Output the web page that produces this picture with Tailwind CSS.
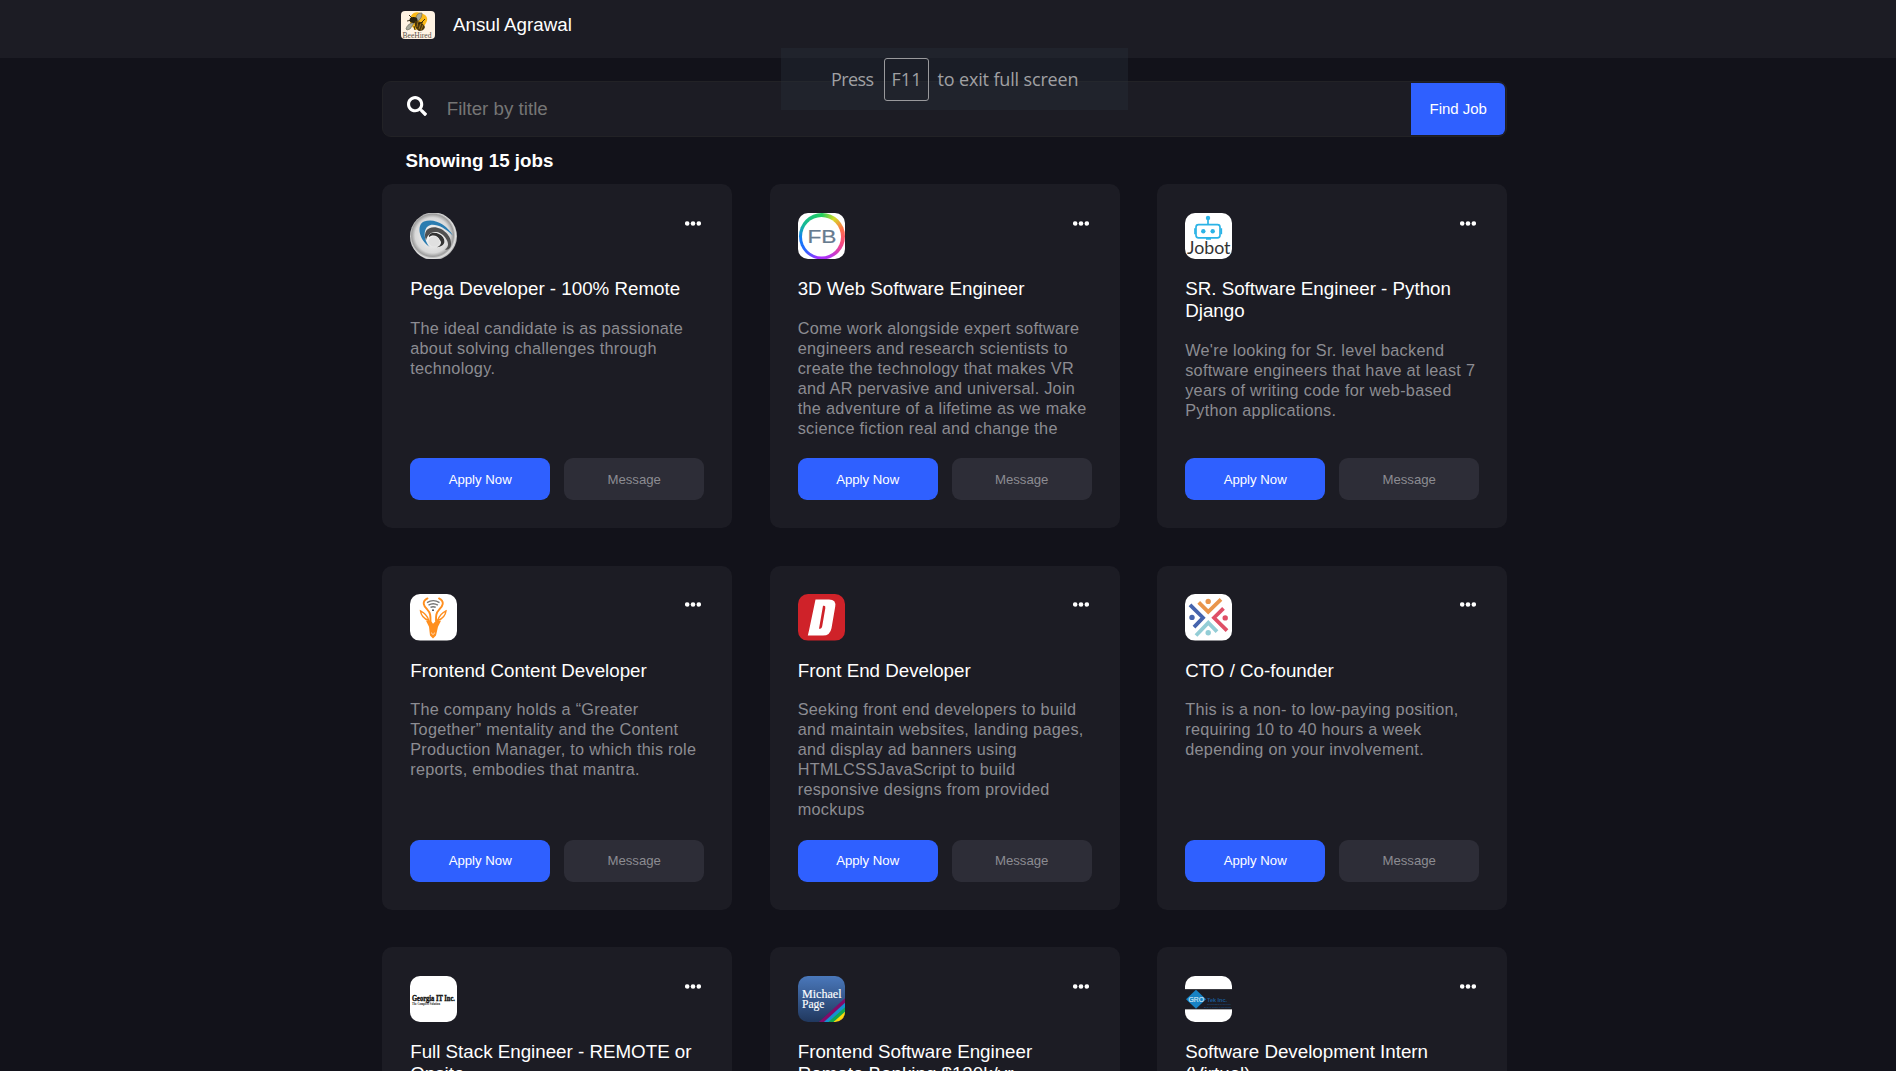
<!DOCTYPE html>
<html lang="en">
<head>
<meta charset="utf-8">
<title>BeeHired</title>
<script src="https://cdn.jsdelivr.net/npm/@tailwindcss/browser@4"></script>
</head>
<body class="h-[1071px] overflow-hidden bg-[#12121a] font-['Liberation_Sans',Arial,sans-serif] text-white">
<header class="h-[58px] bg-[#1c1c24] pl-[401px] pt-[11px]">
  <div class="flex items-start gap-[18px]">
    <svg class="h-[28px] w-[34px] rounded-[4px]" viewBox="0 0 34 28">
      <rect width="34" height="28" fill="#fff3e3"/>
      <path d="M10 5c3-5 8-4 12-2 5 2 5 6 3 9l-3 5-8 2-5-6z" fill="#fbb917"/>
      <path d="M5 18c1-4 4-6 8-6l-4 6-3 1zM15 8c0-4 2-6 6-6 0 3-1 6-4 8z" fill="#a9aa9c" stroke="#6d6d60" stroke-width=".7"/>
      <ellipse cx="12.500" cy="9" rx="4" ry="3" fill="#2b230f"/>
      <path d="M14 10c5 0 8 2 10 6-1 3-3 4-6 4-3-2-5-5-4-10z" fill="#4a360c"/>
      <path d="M17 11l-1 5M20 12l-2 6M22 14l-2 5" stroke="#c08a1b" stroke-width=".7"/>
      <path d="M17 13l5-2M8 4l3 3M6 10l5-1M14 19l-1-4M24 8l-4 4" stroke="#2b230f" stroke-width=".9"/>
      <text x="1.500" y="26.800" font-family="Liberation Serif" font-size="8" textLength="29" lengthAdjust="spacingAndGlyphs" fill="#5c5248">BeeHired</text>
    </svg>
    <span class="pt-[3px] text-[18.75px] leading-[22px]">Ansul Agrawal</span>
  </div>
</header>

<main class="ml-[382.200px] w-[1125px] pt-[23px]">
  <div class="flex h-[56px] items-start rounded-[9px] border border-[#222226] bg-[#1c1c24]">
    <svg class="ml-[24px] mt-[14px] size-[20px] shrink-0" viewBox="0 0 512 512" fill="#fff"><path d="M505 442.7L405.3 343c-4.500-4.500-10.600-7-17-7H372c27.600-35.300 44-79.700 44-128C416 93.100 322.900 0 208 0S0 93.100 0 208s93.100 208 208 208c48.300 0 92.700-16.400 128-44v16.300c0 6.400 2.500 12.500 7 17l99.700 99.700c9.400 9.400 24.600 9.400 33.900 0l28.300-28.300c9.400-9.400 9.400-24.600.1-34zM208 336c-70.700 0-128-57.200-128-128 0-70.700 57.200-128 128-128 70.700 0 128 57.200 128 128 0 70.700-57.200 128-128 128z"/></svg>
    <span class="ml-[19.500px] mt-[16px] flex-1 text-[18.75px] leading-[22px] text-[#757575]">Filter by title</span>
    <button class="mr-px mt-px h-[52px] w-[94px] rounded-r-[6px] bg-[#2f60ff] pt-px text-[15px] tracking-[-0.03px]">Find Job</button>
  </div>
  <h1 class="ml-[23.200px] mt-[12.600px] text-[18.75px] leading-[22px] font-bold">Showing 15 jobs</h1>
  <div id="jobs" class="mt-[12.500px] grid grid-cols-[350px_350px_350px] gap-[37.5px]"></div>
</main>

<div class="absolute left-[781px] top-[48px] flex h-[62px] w-[347px] items-center bg-[#29303a]/40 pl-[50px] font-['Open_Sans',sans-serif] text-[18px] text-[#a0a0a3]">
  <span class="w-[53px] tracking-[-0.6px]">Press</span>
  <span class="flex h-[43px] w-[45px] items-center justify-center rounded-[3px] border border-[#99999c]">F11</span>
  <span class="ml-[8.500px] whitespace-nowrap tracking-[-0.150px]">to exit full screen</span>
</div>

<script>
const logos = {
  pega: `<defs><radialGradient id="pg" cx=".48" cy=".48" r=".53"><stop offset="0" stop-color="#fff"/><stop offset=".7" stop-color="#d8d8d8"/><stop offset=".84" stop-color="#9d9d9d"/><stop offset=".92" stop-color="#e2e2e2"/><stop offset="1" stop-color="#a0a0a0"/></radialGradient></defs>
    <circle cx="23.500" cy="23" r="23.500" fill="url(#pg)"/>
    <path d="M20 34C9 27 6 12 14 8.500c10-4 23 3 29 14-8-8-17-12-23-10.500-7 2-7 14 0 22z" fill="#2b7cb0"/>
    <path d="M16 27c-3-8 1-13 8-13 9 0 18 9 17 17 0 4-3 6-6 5 4-2 4-7 0-12-5-7-16-8-19 3z" fill="#505050"/>
    <path d="M19 24c-1-6 10-6 14 0 3 5 1 9-6 10 4-2 5-5 3-7-2-5-8-6-11-3z" fill="#333"/><ellipse cx="24" cy="28" rx="5.500" ry="5" fill="#e0e0e0"/>`,
  fb: `<foreignObject width="47" height="46"><div class="flex h-[46px] w-[47px] items-center justify-center bg-white"><div class="flex size-[46px] items-center justify-center rounded-full bg-[conic-gradient(#23cf5f,#d4dc28_35deg,#ff7048_70deg,#f8487f_110deg,#b433ee_160deg,#a32cff_190deg,#2867ff_230deg,#127cf6_265deg,#15b99a_300deg,#23cf5f)]"><div class="size-[39px] rounded-full bg-white"></div></div></div></foreignObject>
    <text x="9.500" y="29.500" font-family="Liberation Sans" font-size="18.500" textLength="29" lengthAdjust="spacingAndGlyphs" fill="#667b8f" stroke="#667b8f" stroke-width=".2">FB</text>`,
  jobot: `<rect width="47" height="46" fill="#fff"/><g fill="none" stroke="#2bb3e6" stroke-width="1.700"><rect x="11" y="11.500" width="24" height="13" rx="2.500"/><path d="M23 5v6M10 15v6M36.300 15v6M21 25.500h5"/></g><g fill="#2bb3e6"><circle cx="23" cy="5" r="2.200"/><circle cx="18.300" cy="18" r="2.200"/><circle cx="27.700" cy="18" r="2.200"/></g>
    <text x="2" y="41" font-family="Lato" font-size="17" textLength="43.500" lengthAdjust="spacingAndGlyphs" fill="#333">Jobot</text>`,
  antelope: `<rect width="47" height="47" fill="#fff"/><g fill="none" stroke="#ff8f1f" stroke-linecap="round"><path d="M17.500 4.500c-6 3-4 8 0 11.500 3 3 3 6 3 11M29 4.500c6 3 4 8 0 11.500-3 3-3 6-3 11" stroke-width="1.900"/><path d="M19 27c-5-2-8-5-8.500-10 4 2 7 5 8.500 10zM27.500 27c5-2 8-5 8.500-10-4 2-7 5-8.500 10z" stroke-width="1.400"/></g>
    <path d="M16 27h5l2 3 3-3h5l-3 6-2 9-3 3-3-3-1-9z" fill="#ff8f1f"/><path d="M21 39l2 2 2-2" stroke="#fff" fill="none" stroke-width=".7"/>
    <g fill="none" stroke="#777" stroke-width="1.400"><path d="M17 8.700q6.300-4 12.500 0M18.500 11.300q4.700-3 9.400 0M20.500 13.600q2.600-1.500 5.200 0"/></g><circle cx="23" cy="16.300" r="1" fill="#444"/>`,
  d: `<rect width="47" height="47" fill="#cf2229"/><path fill-rule="evenodd" d="M17.500 5.500H31q7.500 0 6.200 7.500l-3.700 21.500q-1.400 7.500-8.500 7.500H9.800l1.200-5zM25 12l-4 23h1.200q1.600 0 2-2.400l3.100-18.200q.400-2.400-1.300-2.400z" fill="#fff"/>`,
  cto: `<rect width="47" height="47" fill="#fff"/><g fill="none" stroke-width="3.800"><path d="M13.700 8.500l9.500 9.500L36 5.500" stroke="#e9954b"/><path d="M5 11l13 13L9 33.500" stroke="#4664ad"/><path d="M38.500 14.500L29 24l13 13" stroke="#df4f66"/><path d="M11 42l12.300-13L32 38" stroke="#93cdd6"/></g><circle cx="23.200" cy="7.500" r="2.700" fill="#e9954b"/><circle cx="7" cy="23.700" r="2.700" fill="#4664ad"/><circle cx="40.200" cy="24.200" r="2.700" fill="#df4f66"/><circle cx="23.200" cy="39.200" r="2.700" fill="#93cdd6"/>`,
  georgia: `<rect width="47" height="46" fill="#fff"/><text x="2" y="24.500" font-family="Liberation Serif" font-weight="700" font-size="8.500" textLength="43" lengthAdjust="spacingAndGlyphs" fill="#111" stroke="#111" stroke-width=".4">Georgia IT Inc.</text><text x="2" y="29" font-family="Liberation Serif" font-weight="700" font-size="3" textLength="28" lengthAdjust="spacingAndGlyphs" fill="#222">The Complete Solution</text>`,
  page: `<defs><linearGradient id="mp" x2="0" y2="1"><stop stop-color="#4a78bb"/><stop offset="1" stop-color="#20375d"/></linearGradient></defs><rect width="47" height="46" fill="url(#mp)"/><g stroke-width="4"><path d="M20 49l30-27" stroke="#820b69"/><path d="M25 49l25-22.500" stroke="#1590d0"/><path d="M29.500 49L50 31" stroke="#12a650"/><path d="M34.500 49L50 35.500" stroke="#ffd80c"/><path d="M39 49l11-9.500" stroke="#f59a18"/></g>
    <g font-family="Liberation Serif" font-size="12" fill="#fff" stroke="#fff" stroke-width=".15"><text x="4" y="21.800" textLength="39.500" lengthAdjust="spacingAndGlyphs">Michael</text><text x="4" y="31.300" textLength="22.500" lengthAdjust="spacingAndGlyphs">Page</text></g>`,
  gro: `<rect width="47" height="13" fill="#fff"/><rect y="33" width="47" height="13" fill="#fff"/><path d="M11 13.500L21 23 11 32.500 1 23z" fill="#1782c4"/><text x="3.500" y="25.800" font-family="Liberation Sans" font-size="8" textLength="15.500" lengthAdjust="spacingAndGlyphs" fill="#cfe8f7" stroke="#cfe8f7" stroke-width=".2">GRO</text><g font-family="Liberation Sans" fill="#1a5a96"><text x="22" y="25.500" font-size="6" font-weight="700" textLength="20" lengthAdjust="spacingAndGlyphs">Tek Inc.</text><text x="22" y="28.600" font-size="2.300" textLength="24" lengthAdjust="spacingAndGlyphs">Committed to Service</text><text x="19" y="31.300" font-size="2.300" textLength="27" lengthAdjust="spacingAndGlyphs">Best in Class IT Solutions</text></g>`
};
const jobs = [
  ['pega', 'Pega Developer - 100% Remote', 'The ideal candidate is as passionate<br>about solving challenges through<br>technology.'],
  ['fb', '3D Web Software Engineer', 'Come work alongside expert software<br>engineers and research scientists to<br>create the technology that makes VR<br>and AR pervasive and universal. Join<br>the adventure of a lifetime as we make<br>science fiction real and change the'],
  ['jobot', 'SR. Software Engineer - Python<br>Django', "We're looking for Sr. level backend<br>software engineers that have at least 7<br>years of writing code for web-based<br>Python applications."],
  ['antelope', 'Frontend Content Developer', 'The company holds a “Greater<br>Together” mentality and the Content<br>Production Manager, to which this role<br>reports, embodies that mantra.'],
  ['d', 'Front End Developer', 'Seeking front end developers to build<br>and maintain websites, landing pages,<br>and display ad banners using<br>HTMLCSSJavaScript to build<br>responsive designs from provided<br>mockups'],
  ['cto', 'CTO / Co-founder', 'This is a non- to low-paying position,<br>requiring 10 to 40 hours a week<br>depending on your involvement.'],
  ['georgia', 'Full Stack Engineer - REMOTE or<br>Onsite', ''],
  ['page', 'Frontend Software Engineer<br>Remote Banking $130k/yr', ''],
  ['gro', 'Software Development Intern<br>(Virtual)', '']
];
document.getElementById('jobs').innerHTML = jobs.map(([logo, title, text]) => `
  <article class="flex h-[344px] flex-col rounded-[10px] bg-[#1c1c24] px-[28px] pb-[28px] pt-[28.500px]">
    <div class="flex justify-between">
      <svg class="h-[46.500px] w-[47px] rounded-[10px]" viewBox="0 0 47 ${['antelope','d','cto'].includes(logo) ? 47 : 46}" preserveAspectRatio="none">${logos[logo]}</svg>
      <svg class="mr-[3px] mt-[8px] h-[5px] w-[16px]" viewBox="0 0 16 5" fill="#fff"><circle cx="2.200" cy="2.500" r="2.300"/><circle cx="8" cy="2.500" r="2.300"/><circle cx="13.800" cy="2.500" r="2.300"/></svg>
    </div>
    <h2 class="mt-[19.100px] whitespace-nowrap text-[18.750px] leading-[22px]">${title}</h2>
    <p class="mt-[17.500px] whitespace-nowrap text-[16.250px] leading-[20px] tracking-[0.280px] text-[#8c8c92]">${text}</p>
    <div class="mt-auto flex gap-[14px] text-[13.200px]">
      <button class="h-[42px] flex-1 rounded-[9px] bg-[#2f60ff] pt-px">Apply Now</button>
      <button class="h-[42px] flex-1 rounded-[9px] bg-[#2d2d37] pt-px text-[#8c8c92]">Message</button>
    </div>
  </article>`).join('');
</script>
</body>
</html>
